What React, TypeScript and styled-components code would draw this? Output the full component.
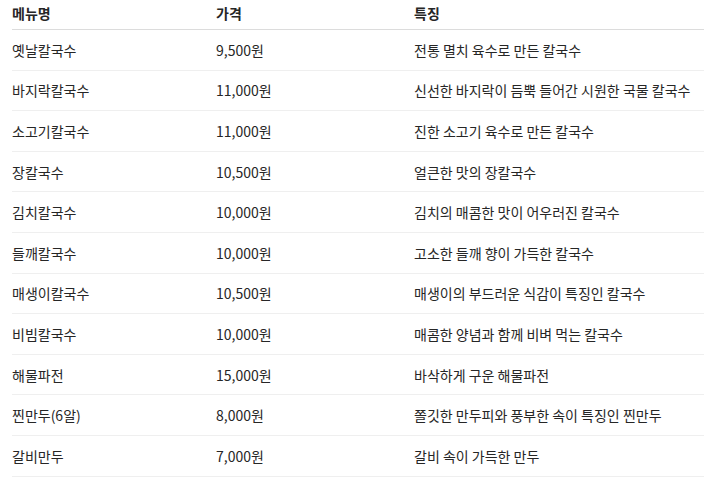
import React from 'react';
import styled, { createGlobalStyle } from 'styled-components';

interface MenuItem {
  name: string;
  price: string;
  note: string;
}

const menu: MenuItem[] = [
  { name: '옛날칼국수', price: '9,500원', note: '전통 멸치 육수로 만든 칼국수' },
  { name: '바지락칼국수', price: '11,000원', note: '신선한 바지락이 듬뿍 들어간 시원한 국물 칼국수' },
  { name: '소고기칼국수', price: '11,000원', note: '진한 소고기 육수로 만든 칼국수' },
  { name: '장칼국수', price: '10,500원', note: '얼큰한 맛의 장칼국수' },
  { name: '김치칼국수', price: '10,000원', note: '김치의 매콤한 맛이 어우러진 칼국수' },
  { name: '들깨칼국수', price: '10,000원', note: '고소한 들깨 향이 가득한 칼국수' },
  { name: '매생이칼국수', price: '10,500원', note: '매생이의 부드러운 식감이 특징인 칼국수' },
  { name: '비빔칼국수', price: '10,000원', note: '매콤한 양념과 함께 비벼 먹는 칼국수' },
  { name: '해물파전', price: '15,000원', note: '바삭하게 구운 해물파전' },
  { name: '찐만두(6알)', price: '8,000원', note: '쫄깃한 만두피와 풍부한 속이 특징인 찐만두' },
  { name: '갈비만두', price: '7,000원', note: '갈비 속이 가득한 만두' },
];

const GlobalStyle = createGlobalStyle`
  body {
    margin: 0;
    background: #ffffff;
    font-family: "Noto Sans CJK KR", "Noto Sans", sans-serif;
    color: #262626;
  }
`;

const Wrapper = styled.div`
  padding-left: 12px;
`;

const Table = styled.table`
  width: 100%;
  border-collapse: collapse;
  font-size: 14px;
  line-height: 20px;
`;

const HeadCell = styled.th<{ width: number }>`
  width: ${({ width }) => width}px;
  text-align: left;
  font-weight: 700;
  padding: 3px 0 6px;
  border-bottom: 1px solid #dcdcdc;
`;

const Row = styled.tr`
  border-bottom: 1px solid #efefef;
`;

const Cell = styled.td`
  padding: 9.8px 0;
  white-space: nowrap;
`;

const App: React.FC = () => (
  <>
    <GlobalStyle />
    <Wrapper>
      <Table>
        <thead>
          <tr>
            <HeadCell width={204}>메뉴명</HeadCell>
            <HeadCell width={198}>가격</HeadCell>
            <HeadCell width={290}>특징</HeadCell>
          </tr>
        </thead>
        <tbody>
          {menu.map((item) => (
            <Row key={item.name}>
              <Cell>{item.name}</Cell>
              <Cell>{item.price}</Cell>
              <Cell>{item.note}</Cell>
            </Row>
          ))}
        </tbody>
      </Table>
    </Wrapper>
  </>
);

export default App;
